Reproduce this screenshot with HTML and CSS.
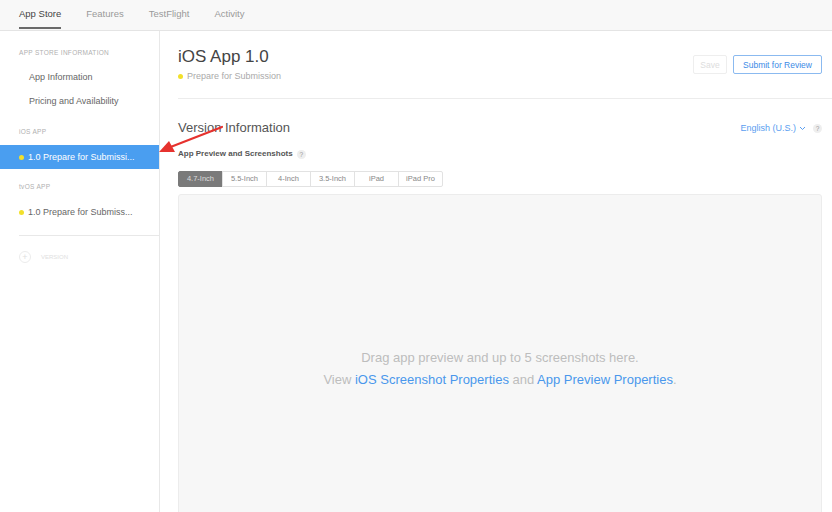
FILE: index.html
```html
<!DOCTYPE html>
<html lang="en">
<head>
    <meta charset="UTF-8">
    <meta name="viewport" content="width=device-width, initial-scale=1.0">
    <title>iOS App 1.0 - App Store</title>
    <link rel="stylesheet" href="styles.css">
</head>
<body>
    <header class="topbar">
        <nav>
            <a href="#" class="tab active">App Store</a>
            <a href="#" class="tab">Features</a>
            <a href="#" class="tab">TestFlight</a>
            <a href="#" class="tab">Activity</a>
        </nav>
    </header>

    <div class="layout">
        <aside class="sidebar">
            <div class="group-title first">APP STORE INFORMATION</div>
            <a href="#" class="side-link">App Information</a>
            <a href="#" class="side-link">Pricing and Availability</a>

            <div class="group-title">iOS APP</div>
            <a href="#" class="side-version selected"><span class="dot"></span>1.0 Prepare for Submissi...</a>

            <div class="group-title">tvOS APP</div>
            <a href="#" class="side-version"><span class="dot"></span>1.0 Prepare for Submiss...</a>

            <div class="side-divider"></div>
            <div class="add-version"><span class="plus">+</span>VERSION</div>
        </aside>

        <main class="content">
            <div class="page-head">
                <div>
                    <h1>iOS App 1.0</h1>
                    <div class="status"><span class="dot"></span>Prepare for Submission</div>
                </div>
                <div class="actions">
                    <button class="btn disabled">Save</button>
                    <button class="btn primary">Submit for Review</button>
                </div>
            </div>

            <div class="section">
                <div class="section-head">
                    <h2>Version Information</h2>
                    <div class="lang">English (U.S.)
                        <svg class="chev" width="7" height="5" viewBox="0 0 7 5"><polyline points="1,1 3.5,3.5 6,1" fill="none" stroke="#5a9ef0" stroke-width="1"/></svg>
                        <span class="help">?</span>
                    </div>
                </div>
                <div class="label">App Preview and Screenshots <span class="help">?</span></div>

                <div class="segments">
                    <span class="seg on">4.7-Inch</span>
                    <span class="seg">5.5-Inch</span>
                    <span class="seg">4-Inch</span>
                    <span class="seg">3.5-Inch</span>
                    <span class="seg">iPad</span>
                    <span class="seg">iPad Pro</span>
                </div>

                <div class="dropzone">
                    <p>Drag app preview and up to 5 screenshots here.</p>
                    <p>View <a href="#">iOS Screenshot Properties</a> and <a href="#">App Preview Properties</a>.</p>
                </div>
            </div>
        </main>
    </div>

    <!-- annotation arrow -->
    <svg class="arrow" width="80" height="40" viewBox="0 0 80 40">
        <line x1="64" y1="3" x2="10" y2="24" stroke="#e6322e" stroke-width="2.2" stroke-linecap="round"/>
        <polygon points="1,28 11,17 17,28" fill="#e6322e"/>
    </svg>
</body>
</html>
```

FILE: styles.css
```css
body {
    margin: 0;
    font-family: "Liberation Sans", Arial, sans-serif;
    background: #fff;
    color: #333;
    width: 832px;
    height: 512px;
    overflow: hidden;
    position: relative;
}
a {
    text-decoration: none;
}
.topbar {
    height: 30px;
    background: #f8f8f8;
    border-bottom: 1px solid #e4e4e4;
}
.topbar nav {
    display: flex;
    height: 30px;
    padding-left: 19px;
    gap: 25px;
}
.tab {
    font-size: 9.5px;
    color: #9a9a9a;
    line-height: 27px;
    height: 29px;
}
.tab.active {
    color: #444;
    border-bottom: 2px solid #6a6a6a;
    height: 27px;
}
.layout {
    display: flex;
    height: 481px;
}
.sidebar {
    width: 159px;
    border-right: 1px solid #e8e8e8;
    flex-shrink: 0;
}
.group-title {
    font-size: 6.5px;
    letter-spacing: 0.3px;
    color: #b0b0b0;
    padding-left: 19px;
    margin-top: 13px;
    line-height: 12px;
}
.group-title.first {
    margin-top: 16px;
}
.side-link {
    display: block;
    font-size: 9px;
    color: #666;
    padding-left: 29px;
    line-height: 24px;
}
.group-title + .side-link {
    margin-top: 6px;
}
.side-version {
    display: flex;
    align-items: center;
    font-size: 9px;
    color: #666;
    padding-left: 19px;
    height: 24px;
    margin-top: 7px;
}
.side-version.selected {
    background: #4a9ef0;
    color: #fff;
}
.side-version + .group-title {
    margin-top: 12px;
}
.dot {
    display: inline-block;
    width: 5px;
    height: 5px;
    border-radius: 50%;
    background: #f2e02b;
    margin-right: 4px;
}
.side-divider {
    border-top: 1px solid #e8e8e8;
    margin: 11px 0 0 19px;
}
.add-version {
    font-size: 6px;
    color: #e0e0e0;
    padding: 15px 0 0 19px;
    display: flex;
    align-items: center;
}
.plus {
    display: inline-block;
    width: 10px;
    height: 10px;
    border: 1px solid #ececec;
    border-radius: 50%;
    text-align: center;
    line-height: 10px;
    font-size: 9px;
    margin-right: 10px;
}
.content {
    flex: 1;
    padding-left: 18px;
}
.page-head {
    display: flex;
    justify-content: space-between;
    align-items: flex-start;
    border-bottom: 1px solid #ececec;
    padding: 16px 10px 16px 0;
}
h1 {
    margin: 0;
    font-size: 17px;
    font-weight: normal;
    color: #444;
    line-height: 20px;
}
.status {
    display: flex;
    align-items: center;
    font-size: 9px;
    color: #aaa;
    margin-top: 3px;
    line-height: 12px;
}
.actions {
    display: flex;
    gap: 6px;
    margin-top: 8px;
}
.btn {
    font-family: inherit;
    font-size: 8.5px;
    height: 19px;
    padding: 0 6px;
    background: #fff;
    border-radius: 2px;
}
.btn.disabled {
    border: 1px solid #eeeeee;
    color: #dddddd;
    width: 34px;
}
.btn.primary {
    border: 1px solid #8bbaf0;
    color: #3b8ae6;
    width: 89px;
}
.section {
    padding-right: 10px;
}
.section-head {
    display: flex;
    justify-content: space-between;
    align-items: center;
    margin-top: 21px;
}
h2 {
    margin: 0;
    font-size: 13px;
    font-weight: normal;
    color: #555;
    line-height: 16px;
}
.lang {
    font-size: 9px;
    color: #5a9ef0;
    display: flex;
    align-items: center;
    gap: 3px;
}
.help {
    display: inline-block;
    width: 9px;
    height: 9px;
    border-radius: 50%;
    background: #eeeeee;
    color: #999;
    font-size: 6.5px;
    font-weight: normal;
    text-align: center;
    line-height: 9px;
    margin-left: 4px;
}
.label {
    font-size: 8px;
    font-weight: bold;
    color: #555;
    margin-top: 13px;
    line-height: 10px;
    display: flex;
    align-items: center;
}
.segments {
    display: flex;
    margin-top: 12px;
}
.seg {
    width: 43px;
    height: 14px;
    border: 1px solid #e2e2e2;
    margin-left: -1px;
    font-size: 7.5px;
    color: #888;
    text-align: center;
    line-height: 14px;
}
.seg:first-child {
    margin-left: 0;
    border-radius: 2px 0 0 2px;
}
.seg:last-child {
    border-radius: 0 2px 2px 0;
}
.seg.on {
    background: #7a7a7a;
    border-color: #7a7a7a;
    color: #dcdcdc;
}
.dropzone {
    margin-top: 7px;
    height: 330px;
    background: #f7f7f7;
    border: 1px solid #ececec;
    border-radius: 3px;
    text-align: center;
    padding-top: 152px;
    box-sizing: border-box;
}
.dropzone p {
    margin: 0;
    font-size: 13px;
    line-height: 22px;
    color: #bdbdbd;
}
.dropzone a {
    color: #4a97ec;
}
.arrow {
    position: absolute;
    left: 158px;
    top: 124px;
}
```
